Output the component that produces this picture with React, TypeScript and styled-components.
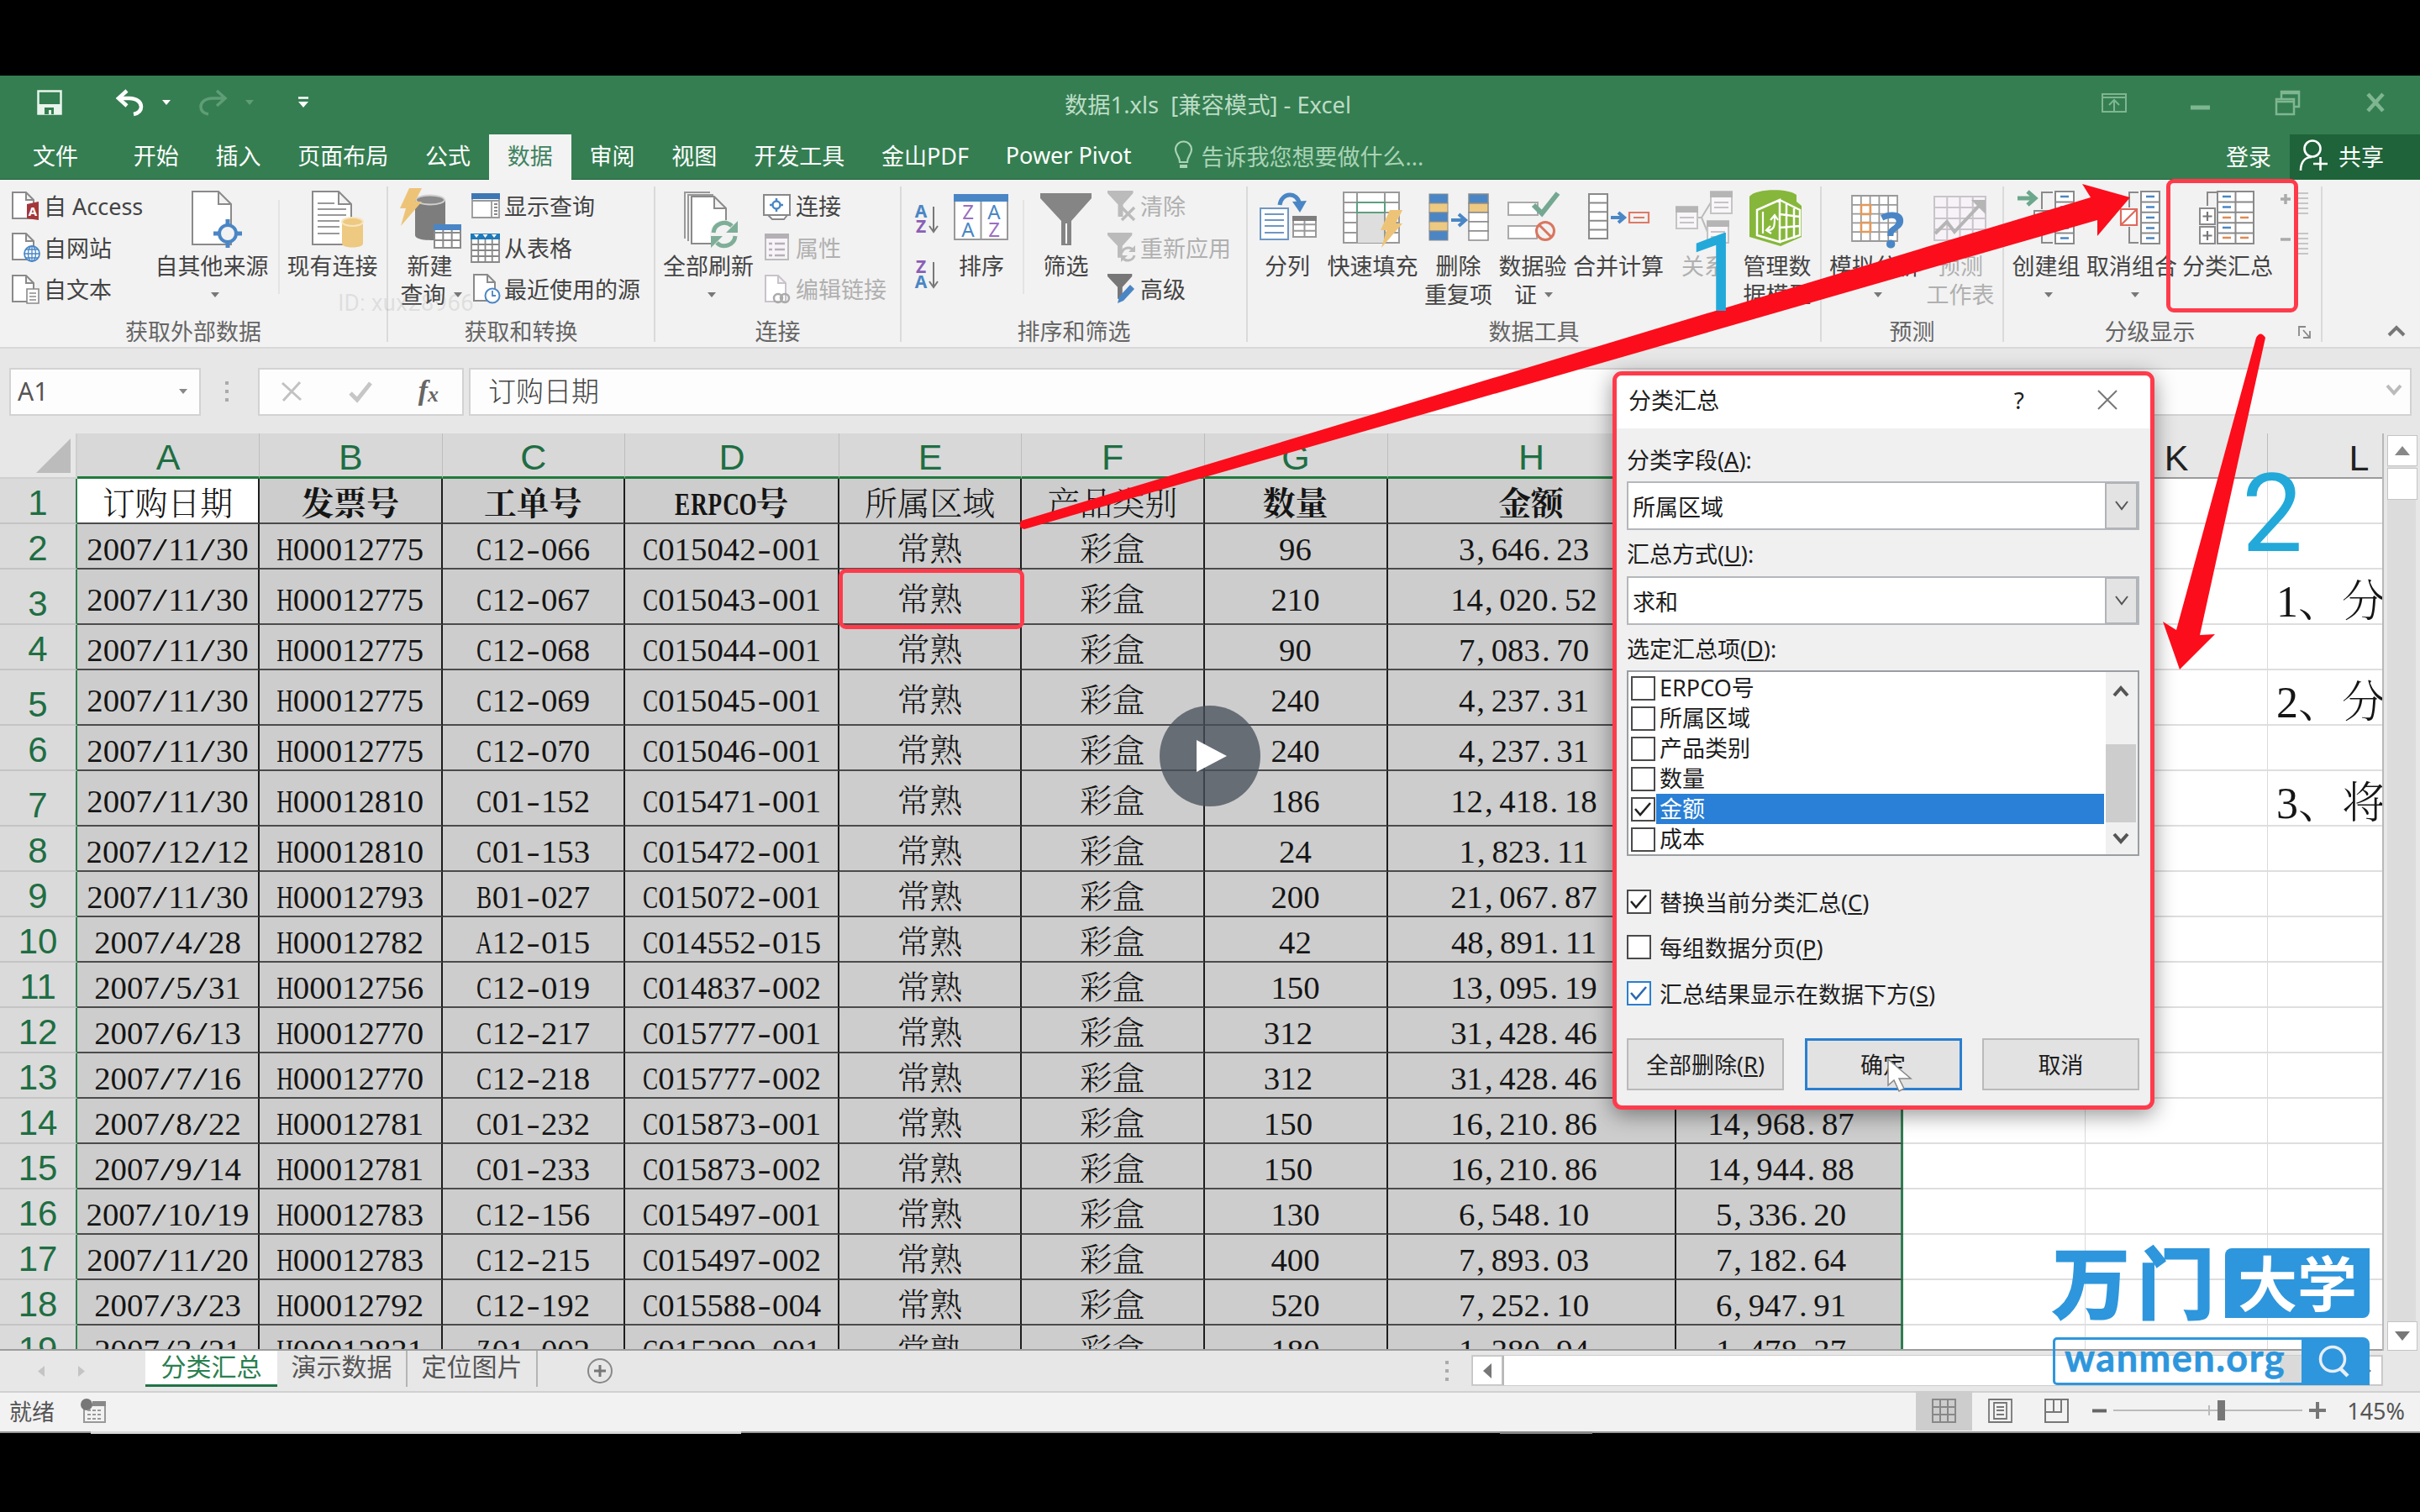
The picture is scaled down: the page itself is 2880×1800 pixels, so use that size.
import React from 'react';
import styled, { createGlobalStyle, css } from 'styled-components';

const UI = `"Noto Sans", "Noto Sans CJK SC", sans-serif`;
const SONG = `"Liberation Serif", "Noto Serif CJK SC", "Noto Sans CJK SC", serif`;
const GREEN = '#357e51';
const RED = '#ff3b4b';
const BLUE = '#4a86c5';

const GlobalStyle = createGlobalStyle`
  * { box-sizing: border-box; }
  body { margin: 0; background: #000; font-family: ${UI}; }
  svg { display: block; flex: none; overflow: visible; }
`;

/* ---------- frame ---------- */

const Screen = styled.div`
  position: relative;
  width: 2880px;
  height: 1800px;
  overflow: hidden;
  background: #000;
  padding-top: 90px;
  font-size: 27px;
  color: #444;
  white-space: nowrap;
`;

const AppWindow = styled.div`
  display: flex;
  flex-direction: column;
  width: 2880px;
  height: 1616px;
  background: #e7e7e7;
`;

/* ---------- title bar ---------- */

const TitleBar = styled.div`
  display: grid;
  grid-template-columns: 1fr auto 1fr;
  align-items: center;
  height: 70px;
  background: ${GREEN};
`;

const QuickAccess = styled.div`
  display: flex;
  align-items: center;
  padding: 0 0 6px 44px;
`;

const Gap = styled.span<{ $w: number }>`
  flex: none;
  width: ${(p) => p.$w}px;
`;

const DocTitle = styled.div`
  padding: 0 5px 5px 0;
  color: #bcdcc6;
  font-size: 27.3px;
  white-space: pre;
`;

const WindowControls = styled.div`
  display: flex;
  justify-content: flex-end;
  align-items: center;
  padding: 0 42px 6px 0;
`;

/* ---------- tab strip ---------- */

const TabStrip = styled.div`
  display: flex;
  height: 54px;
  background: ${GREEN};
  border-bottom: 1px solid #1f6439;
`;

const Tab = styled.div<{ $active?: boolean; $ml?: number }>`
  display: flex;
  align-items: center;
  height: 54px;
  margin-left: ${(p) => p.$ml ?? 0}px;
  padding: 0 21.9px 5px;
  color: ${(p) => (p.$active ? '#3f8360' : '#fff')};
  background: ${(p) => (p.$active ? '#f3f3f3' : 'transparent')};
`;

const TellMe = styled.div`
  display: flex;
  align-items: center;
  gap: 11px;
  margin-left: 29px;
  padding-bottom: 3px;
  color: #a9d3b6;
`;

const SignIn = styled.div`
  display: flex;
  align-items: center;
  margin-left: auto;
  padding: 0 22px 3px 0;
  color: #fff;
`;

const Share = styled.div`
  display: flex;
  align-items: center;
  gap: 12px;
  width: 155px;
  padding: 0 0 3px 12px;
  color: #fff;
  background: #1e6339;
`;

/* ---------- ribbon ---------- */

const Ribbon = styled.div`
  display: flex;
  height: 201px;
  padding: 8px 0 6px;
  background: #f2f2f2;
  border-bottom: 2px solid #d8d8d8;
`;

const Group = styled.div<{ $w: number }>`
  display: flex;
  flex-direction: column;
  flex: none;
  width: ${(p) => p.$w}px;
  border-right: 2px solid #dadada;
`;

const GroupBody = styled.div`
  display: flex;
  flex: none;
  height: 154px;
`;

const GroupLabel = styled.div`
  display: flex;
  align-items: center;
  justify-content: center;
  flex: none;
  height: 31px;
  padding-top: 3px;
  color: #666;
`;

const Launcher = styled.div`
  display: flex;
  margin: 4px 8px 0 auto;
`;

const LabelCenter = styled.div`
  flex: 1;
  text-align: center;
`;

const InnerRule = styled.div`
  width: 2px;
  height: 112px;
  margin-top: 16px;
  background: #e4e4e4;
`;

const Big = styled.div<{ $w: number; $dim?: boolean }>`
  display: flex;
  flex-direction: column;
  align-items: center;
  flex: none;
  width: ${(p) => p.$w}px;
  padding-top: 2px;
  line-height: 34px;
  color: ${(p) => (p.$dim ? '#b0b0b0' : '#444')};
`;

const BigCaption = styled.div`
  margin-top: 4px;
`;

const BigLine = styled.div<{ $dx?: number }>`
  display: flex;
  align-items: center;
  justify-content: center;
  gap: 9px;
  min-height: 34px;
  padding-left: ${(p) => p.$dx ?? 0}px;
`;

const SmallStack = styled.div<{ $w: number; $pl: number }>`
  flex: none;
  width: ${(p) => p.$w}px;
  padding-left: ${(p) => p.$pl}px;
  margin-top: -2px;
`;

const SmallItem = styled.div<{ $dim?: boolean; $gap?: number }>`
  display: flex;
  align-items: center;
  gap: ${(p) => p.$gap ?? 4}px;
  height: 49.5px;
  color: ${(p) => (p.$dim ? '#b0b0b0' : '#444')};
`;

const Caret = styled.span<{ $color?: string; $s?: number }>`
  flex: none;
  width: 0;
  height: 0;
  border: ${(p) => p.$s ?? 5.5}px solid transparent;
  border-bottom: 0;
  border-top: ${(p) => (p.$s ?? 5.5) + 1}px solid ${(p) => p.$color ?? '#777'};
`;

const SortStack = styled.div`
  display: flex;
  flex-direction: column;
  gap: 30px;
  width: 62px;
  padding: 21px 0 0 16px;
`;

const DetailStack = styled.div`
  display: flex;
  flex-direction: column;
  gap: 14px;
  padding: 6px 0 0 4px;
`;

const Collapse = styled.div`
  display: flex;
  align-items: flex-end;
  margin-left: auto;
  padding: 0 18px 7px 0;
`;

/* ---------- formula bar ---------- */

const FormulaBar = styled.div`
  display: flex;
  height: 101px;
  padding: 23px 10px 22px 11px;
  font-size: 31px;
`;

const FieldBox = styled.div<{ $w?: number }>`
  display: flex;
  align-items: center;
  ${(p) => (p.$w ? css`width: ${p.$w}px;` : css`flex: 1;`)}
  height: 57px;
  border: 2px solid #d2d2d2;
  background: #fdfdfd;
`;

const NameBox = styled(FieldBox)`
  justify-content: space-between;
  padding: 0 14px 2px 8px;
  color: #555;
  font-size: 30px;
`;

const Dots = styled.div<{ $ml: number; $mr: number }>`
  display: flex;
  flex-direction: column;
  justify-content: center;
  gap: 6px;
  margin: 0 ${(p) => p.$mr}px 0 ${(p) => p.$ml}px;
  &::before, &::after { content: ''; }
  &::before, &::after, & > i { width: 4px; height: 4px; background: #aaa; }
`;

const FxBox = styled(FieldBox)`
  justify-content: space-between;
  padding: 0 28px 2px 25px;
  margin-right: 6px;
`;

const Fx = styled.span`
  font: italic 700 34px "Liberation Serif", serif;
  color: #666;
  sub { font-size: 26px; vertical-align: -2px; }
`;

const FormulaInput = styled(FieldBox)`
  justify-content: space-between;
  padding: 0 10px 5px 21px;
  color: #444;
  font-size: 33px;
  font-weight: 300;
`;

/* ---------- sheet ---------- */

const SheetArea = styled.div`
  display: flex;
  height: 1092px;
`;

const Grid = styled.div`
  width: 2835px;
  overflow: hidden;
  border-bottom: 2px solid #9d9d9d;
`;

const HeaderRow = styled.div`
  display: flex;
  height: 54px;
`;

const Corner = styled.div`
  display: flex;
  justify-content: flex-end;
  align-items: flex-end;
  width: 92px;
  flex: none;
  padding: 0 6px 5px 0;
  border-right: 2px solid #cfcfcf;
  border-bottom: 2px solid #d0d0d0;
`;

const ColHead = styled.div<{ $w: number; $sel?: boolean }>`
  display: flex;
  align-items: center;
  justify-content: center;
  flex: none;
  width: ${(p) => p.$w}px;
  padding: 6px 0 0;
  font: 43px/1 "Liberation Sans", sans-serif;
  color: ${(p) => (p.$sel ? '#1f6e43' : '#222')};
  background: ${(p) => (p.$sel ? '#d8d8d8' : '#e7e7e7')};
  border-right: 1px solid #bdbdbd;
  border-bottom: ${(p) => (p.$sel ? '3px solid #217a3c' : '2px solid #9b9b9b')};
`;

const Row = styled.div<{ $h: number }>`
  display: flex;
  height: ${(p) => p.$h}px;
`;

const RowHead = styled.div`
  display: flex;
  align-items: flex-end;
  justify-content: center;
  flex: none;
  width: 92px;
  padding-bottom: 1px;
  font: 42px/44px "Liberation Sans", sans-serif;
  color: #1f6e43;
  background: #dadada;
  border-right: 2px solid #2f8050;
  border-bottom: 2px solid #c4c4c4;
`;

const Cell = styled.div<{ $w: number; $bold?: boolean; $white?: boolean; $last?: boolean }>`
  display: flex;
  align-items: center;
  justify-content: center;
  flex: none;
  width: ${(p) => p.$w}px;
  padding: 7px 0 0;
  font-family: ${SONG};
  font-size: 38.8px;
  line-height: 44px;
  font-weight: ${(p) => (p.$bold ? 700 : 300)};
  color: #151515;
  white-space: pre;
  background: ${(p) => (p.$white ? '#fff' : '#cdcdcd')};
  border-right: ${(p) => (p.$last ? '3px solid #2f7d50' : '2px solid #1d1d1d')};
  border-bottom: 2px solid #4b4b4b;
`;

const BlankCell = styled.div<{ $w: number }>`
  flex: none;
  width: ${(p) => p.$w}px;
  padding-left: 10px;
  font-family: ${SONG};
  font-size: 52px;
  line-height: 78px;
  font-weight: 300;
  color: #151515;
  background: #fff;
  border-right: 1px solid #dadada;
  border-bottom: 2px solid #dedede;
`;

const Half = styled.span<{ $left?: boolean }>`
  display: inline-flex;
  justify-content: ${(p) => (p.$left ? 'flex-start' : 'center')};
  width: 0.5em;
  padding-left: ${(p) => (p.$left ? 2 : 0)}px;
`;

const Squeeze = styled.span<{ $k: number }>`
  transform: scaleX(${(p) => p.$k});
`;

const Pad = styled.span`
  width: 0.44em;
`;

const VScroll = styled.div`
  display: flex;
  flex-direction: column;
  width: 45px;
  padding: 2px 5px 0 4px;
  border-left: 2px solid #b8b8b8;
`;

const VTrack = styled.div`
  flex: 1;
  padding-top: 2px;
  background: #dcdcdc;
`;

const ScrollBtn = styled.div<{ $w?: number; $h?: number }>`
  display: flex;
  align-items: center;
  justify-content: center;
  flex: none;
  width: ${(p) => p.$w ?? 36}px;
  height: ${(p) => p.$h ?? 37}px;
  background: #fff;
  border: 1px solid #c4c4c4;
`;

/* ---------- sheet tabs / status ---------- */

const SheetTabs = styled.div`
  display: flex;
  height: 50px;
  font-size: 30px;
  border-bottom: 2px solid #d0d0d0;
`;

const NavArrows = styled.div`
  display: flex;
  align-items: center;
  gap: 40px;
  width: 173px;
  padding-left: 45px;
`;

const SheetTab = styled.div<{ $active?: boolean }>`
  display: flex;
  align-items: center;
  justify-content: center;
  height: 43px;
  padding-bottom: 9px;
  width: ${(p) => (p.$active ? 157 : 155)}px;
  color: ${(p) => (p.$active ? '#2a7f50' : '#555')};
  ${(p) =>
    p.$active
      ? css`background: #fff; border-bottom: 3px solid #217346; padding-bottom: 6px;`
      : css`border-right: 2px solid #b5b5b5;`}
`;

const AddSheet = styled.div`
  display: flex;
  align-items: center;
  padding-left: 59px;
`;

const HScroll = styled.div`
  display: flex;
  width: 1085px;
  height: 37px;
  margin: 5px 44px 0 0;
  background: #fff;
  border: 1px solid #cdcdcd;
`;

const HTrack = styled.div`
  flex: 1;
  display: flex;
  justify-content: flex-end;
  border-left: 2px solid #b8b8b8;
  &::after { content: ''; width: 86px; background: #dadada; }
`;

const TabSpacer = styled.div`
  flex: 1;
`;

const StatusBar = styled.div`
  display: flex;
  align-items: center;
  height: 48px;
  padding: 0 18px 4px 11px;
  color: #555;
  background: #f2f2f2;
  border-bottom: 2px solid #999;
`;

const ViewBtn = styled.div<{ $on?: boolean }>`
  display: flex;
  align-items: center;
  justify-content: center;
  width: 67px;
  height: 47px;
  background: ${(p) => (p.$on ? '#cdcdcd' : 'transparent')};
`;

const ZoomTrack = styled.div`
  display: flex;
  align-items: center;
  width: 225px;
  height: 24px;
  background: linear-gradient(#bbb, #bbb) 0 11px / 100% 2px no-repeat,
    linear-gradient(#bbb, #bbb) 113px 6px / 2px 12px no-repeat;
`;

const ZoomThumb = styled.div`
  width: 9px;
  height: 24px;
  margin-left: 124px;
  background: #777;
`;

const EdgeStrip = styled.div<{ $x: number; $w: number; $c: string }>`
  position: absolute;
  left: ${(p) => p.$x}px;
  top: 1704px;
  width: ${(p) => p.$w}px;
  height: 3px;
  background: ${(p) => p.$c};
`;

/* ---------- dialog ---------- */

const Dialog = styled.div`
  position: absolute;
  left: 1919px;
  top: 442px;
  width: 645px;
  height: 879px;
  border: 5px solid ${RED};
  border-radius: 11px;
  background: #f0f0f0;
  box-shadow: 0 6px 26px rgba(0, 0, 0, 0.42);
  color: #1d1d1d;
  overflow: clip;
`;

const DialogTitle = styled.div`
  display: flex;
  align-items: center;
  height: 63px;
  padding: 0 39px 6px 14px;
  background: #fff;
`;

const Help = styled.span`
  margin: 0 87px 0 auto;
  font-size: 28px;
`;

const DialogBody = styled.div`
  display: flex;
  flex-direction: column;
  padding: 0 13px 0 12px;
`;

const FieldLabel = styled.div<{ $h: number; $pt?: number }>`
  display: flex;
  align-items: center;
  height: ${(p) => p.$h}px;
  padding-top: ${(p) => p.$pt ?? 0}px;
`;

const Combo = styled.div`
  display: flex;
  align-items: center;
  justify-content: space-between;
  height: 58px;
  padding-left: 5px;
  background: #fff;
  border: 2px solid #b4b7bb;
`;

const ComboButton = styled.div`
  display: flex;
  align-items: center;
  justify-content: center;
  width: 39px;
  height: 56px;
  background: #e3e3e3;
  border: 2px solid #b0b3b7;
`;

const ListBox = styled.div`
  display: flex;
  height: 221px;
  background: #fff;
  border: 2px solid #9a9da1;
`;

const ListItems = styled.div`
  flex: 1;
  padding: 1px 0 0 3px;
`;

const ListItem = styled.div`
  display: flex;
  align-items: center;
  height: 36px;
`;

const ItemText = styled.div<{ $sel?: boolean }>`
  flex: 1;
  height: 36px;
  line-height: 35px;
  padding-left: 4px;
  margin-left: 1px;
  color: ${(p) => (p.$sel ? '#fff' : 'inherit')};
  background: ${(p) => (p.$sel ? '#2a7fd6' : 'transparent')};
`;

const ListScroll = styled.div`
  display: flex;
  flex-direction: column;
  align-items: center;
  justify-content: space-between;
  width: 38px;
  padding: 17px 2px 13px 0;
  background: linear-gradient(#cdcdcd, #cdcdcd) 0 86px / 36px 93px no-repeat #f0f0f0;
`;

const CheckBox = styled.span<{ $c?: string }>`
  display: flex;
  align-items: center;
  justify-content: center;
  flex: none;
  width: 29px;
  height: 29px;
  background: #fff;
  border: 2px solid ${(p) => p.$c ?? '#4a4a4a'};
`;

const Options = styled.div`
  display: flex;
  flex-direction: column;
  margin-top: 27px;
`;

const Option = styled.div`
  display: flex;
  align-items: center;
  gap: 10px;
  height: 54.5px;
`;

const Buttons = styled.div`
  display: flex;
  justify-content: space-between;
  margin-top: 26px;
`;

const Button = styled.div<{ $primary?: boolean }>`
  display: flex;
  align-items: center;
  justify-content: center;
  width: 187px;
  height: 62px;
  background: #e2e2e2;
  border: ${(p) => (p.$primary ? '3px solid #2a7fd0' : '2px solid #bababa')};
`;

/* ---------- annotations ---------- */

const Overlay = styled.svg`
  position: absolute;
  left: 0;
  top: 0;
`;

const Mark = styled.div<{ $x: number; $y: number; $w: number; $h: number }>`
  position: absolute;
  left: ${(p) => p.$x}px;
  top: ${(p) => p.$y}px;
  width: ${(p) => p.$w}px;
  height: ${(p) => p.$h}px;
  border: 5px solid ${RED};
  border-radius: 9px;
`;

const StepNumber = styled.div<{ $x: number; $y: number }>`
  position: absolute;
  left: ${(p) => p.$x}px;
  top: ${(p) => p.$y}px;
  font: 400 129px/150px Roboto, sans-serif;
  color: #22a9d9;
`;

const Play = styled.div`
  position: absolute;
  left: 1380px;
  top: 840px;
  display: flex;
  align-items: center;
  justify-content: center;
  width: 120px;
  height: 120px;
  border-radius: 50%;
  background: rgba(71, 79, 90, 0.76);
`;

const Ghost = styled.div`
  position: absolute;
  left: 402px;
  top: 341px;
  font: 28px/40px Roboto, sans-serif;
  color: rgba(120, 120, 120, 0.16);
`;

const Brand = styled.div`
  position: absolute;
  left: 2443px;
  top: 1486px;
  width: 377px;
`;

const BrandTop = styled.div`
  display: flex;
  height: 83px;
  margin-bottom: 23px;
`;

const BrandName = styled.div`
  width: 205px;
  font: 700 91px/72px "Noto Sans CJK SC", sans-serif;
  letter-spacing: 10px;
  -webkit-text-stroke: 3px #2e96dc;
  color: #2e96dc;
`;

const BrandBadge = styled.div`
  flex: 1;
  height: 83px;
  padding-left: 15px;
  border-radius: 8px 0 8px 0;
  font: 700 71px/76px "Noto Sans CJK SC", sans-serif;
  color: #fff;
  background: #2e96dc;
`;

const BrandSearch = styled.div`
  display: flex;
  height: 57px;
  border: 3px solid #2e96dc;
  border-radius: 5px 8px 0 5px;
`;

const BrandUrl = styled.div`
  flex: 1;
  padding-left: 11px;
  font: 700 45px/43px Lato, sans-serif;
  letter-spacing: 1.5px;
  -webkit-text-stroke: 0.6px #2e96dc;
  color: #2e96dc;
`;

const BrandButton = styled.div`
  display: flex;
  align-items: center;
  justify-content: center;
  width: 78px;
  background: #2e96dc;
`;

/* ---------- icons ---------- */

const Art = ({ s = 72, h, children }: { s?: number; h?: number; children: React.ReactNode }) => (
  <svg width={s} height={h ?? s} viewBox={`0 0 ${s} ${h ?? s}`} fill="none">
    {children}
  </svg>
);

const Page = ({ x = 0, y = 0, w = 46, h = 63, f = 15, c = '#8a8a8a' }) => (
  <path
    d={`M${x} ${y}h${w - f}l${f} ${f}v${h - f}h${-w}z M${x + w - f} ${y}v${f}h${f}`}
    fill="#fff"
    stroke={c}
    strokeWidth="2"
  />
);

const Bolt = ({ x = 0, y = 0 }) => (
  <path d={`M${x + 11} ${y}h15l-8 16h8L${x + 1} ${y + 45}l6-21h-7z`} fill="#edc477" />
);

const gridPath = (x: number, y: number, w: number, h: number, c: number, r: number) => {
  let d = `M${x} ${y}h${w}v${h}h${-w}z`;
  for (let i = 1; i < c; i++) d += `M${x + (w * i) / c} ${y}v${h}`;
  for (let i = 1; i < r; i++) d += `M${x} ${y + (h * i) / r}h${w}`;
  return d;
};

const Funnel = ({ k = 1, c = '#858585' }) => (
  <path transform={`scale(${k})`} d="M0 0h61v6L37 33v29h-12V33L0 6z" fill={c} />
);

const Dash = ({ d, c = BLUE }: { d: string; c?: string }) => <path d={d} stroke={c} strokeWidth="2.5" />;

const Tick = ({ c = '#222' }) => (
  <Art s={23}>
    <path d="M2 11l6 7L20 4" stroke={c} strokeWidth="2.6" />
  </Art>
);

const Chevron = ({ up, c = '#555', w = 16, t = 3 }: { up?: boolean; c?: string; w?: number; t?: number }) => (
  <Art s={w} h={12}>
    <path d={up ? `M1 11L${w / 2} 2L${w - 1} 11` : `M1 1L${w / 2} 10L${w - 1} 1`} stroke={c} strokeWidth={t} />
  </Art>
);

const Letter = ({ x, y, c, s, children }: { x: number; y: number; c: string; s: number; children: string }) => (
  <text x={x} y={y} fill={c} fontSize={s} fontFamily={UI} textAnchor="middle" fontWeight={s < 23 ? 700 : 400}>
    {children}
  </text>
);

const SortArrow = ({ flip }: { flip?: boolean }) => (
  <Art s={30} h={36}>
    <Letter x={7} y={16} s={21} c={flip ? '#8a5fb5' : BLUE}>{flip ? 'Z' : 'A'}</Letter>
    <Letter x={7} y={34} s={21} c={flip ? BLUE : '#8a5fb5'}>{flip ? 'A' : 'Z'}</Letter>
    <path d="M22 3v29M17 26l5 7 5-7" stroke="#777" strokeWidth="2" />
  </Art>
);

const OutlineColumn = ({ x }: { x: number }) => (
  <>
    <path d={gridPath(x, 4, 22, 62, 1, 5)} fill="#fff" stroke="#8a8a8a" strokeWidth="2" />
    <Dash d={`M${x + 6} 10h10M${x + 6} 22.500h10M${x + 6} 35h10M${x + 6} 47.500h10M${x + 6} 59.500h10`} />
  </>
);

/* ---------- data ---------- */

const COLS: [string, number][] = [
  ['A', 217], ['B', 217.5], ['C', 217.5], ['D', 255], ['E', 217], ['F', 217.5],
  ['G', 218], ['H', 343], ['I', 270], ['J', 217.5], ['K', 217], ['L', 218],
];

const HEADS: [string, boolean][] = [
  ['订购日期', false], ['发票号', true], ['工单号', true], ['ERPCO号', true], ['所属区域', false],
  ['产品类别', false], ['数量', true], ['金额', true], ['', true],
];

const DATA: string[][] = [
  ['2007/11/30', 'H00012775', 'C12-066', 'C015042-001', '96', '3,646.23', ''],
  ['2007/11/30', 'H00012775', 'C12-067', 'C015043-001', '210', '14,020.52', ''],
  ['2007/11/30', 'H00012775', 'C12-068', 'C015044-001', '90', '7,083.70', ''],
  ['2007/11/30', 'H00012775', 'C12-069', 'C015045-001', '240', '4,237.31', ''],
  ['2007/11/30', 'H00012775', 'C12-070', 'C015046-001', '240', '4,237.31', ''],
  ['2007/11/30', 'H00012810', 'C01-152', 'C015471-001', '186', '12,418.18', ''],
  ['2007/12/12', 'H00012810', 'C01-153', 'C015472-001', '24', '1,823.11', ''],
  ['2007/11/30', 'H00012793', 'B01-027', 'C015072-001', '200', '21,067.87', ''],
  ['2007/4/28', 'H00012782', 'A12-015', 'C014552-015', '42', '48,891.11', ''],
  ['2007/5/31', 'H00012756', 'C12-019', 'C014837-002', '150', '13,095.19', ''],
  ['2007/6/13', 'H00012770', 'C12-217', 'C015777-001', '312 ', '31,428.46', ''],
  ['2007/7/16', 'H00012770', 'C12-218', 'C015777-002', '312 ', '31,428.46', ''],
  ['2007/8/22', 'H00012781', 'C01-232', 'C015873-001', '150 ', '16,210.86', '14,968.87'],
  ['2007/9/14', 'H00012781', 'C01-233', 'C015873-002', '150 ', '16,210.86', '14,944.88'],
  ['2007/10/19', 'H00012783', 'C12-156', 'C015497-001', '130', '6,548.10', '5,336.20'],
  ['2007/11/20', 'H00012783', 'C12-215', 'C015497-002', '400', '7,893.03', '7,182.64'],
  ['2007/3/23', 'H00012792', 'C12-192', 'C015588-004', '520', '7,252.10', '6,947.91'],
  ['2007/3/21', 'H00012831', 'Z01-002', 'C015399-001', '180', '1,380.94', '1,478.37'],
];

const NOTES: Record<number, string> = { 3: '1、分', 5: '2、分', 7: '3、将' };

const STRETCH: Record<string, number> = { '/': 1.6, '-': 1.25 };

/* Sets Latin capitals and punctuation on the same half-em grid as the digits. */
const SongText = ({ value }: { value: string }) => (
  <span>
    {value.trimEnd().split(/([A-Z/,.-])/).filter(Boolean).map((t, i) =>
      /^[A-Z/-]$/.test(t) ? (
        <Half key={i}><Squeeze $k={STRETCH[t] ?? 0.7}>{t}</Squeeze></Half>
      ) : /^[,.]$/.test(t) ? (
        <Half key={i} $left>{t}</Half>
      ) : (
        t
      ),
    )}
  </span>
);

const cellsOf = (r: string[]) => [r[0], r[1], r[2], r[3], '常熟', '彩盒', r[4], r[5] + ' ', r[6] + ' '];

/* ---------- sections ---------- */

const TopBar = () => (
  <TitleBar>
    <QuickAccess>
      <Art s={30}>
        <path d="M1.500 1.500h27v27h-27z" stroke="#e8f5ec" strokeWidth="2.500" />
        <path d="M1 17h28v12H1z" fill="#e8f5ec" />
        <path d="M9 21h11v8h-3v-5h-3v5H9z" fill={GREEN} />
      </Art>
      <Gap $w={64} />
      <Art s={34} h={30}>
        <path d="M3 10h13c9 0 14 5 14 10 0 5-4 8-9 9" stroke="#fff" strokeWidth="4.500" />
        <path d="M13 1L3 10l10 9" stroke="#fff" strokeWidth="4.500" />
      </Art>
      <Gap $w={21} />
      <Caret $color="#fff" />
      <Gap $w={34} />
      <Art s={34} h={30}>
        <path d="M30 10H16C7 10 2 15 2 20c0 5 4 8 9 9M21 1l10 9-10 9" stroke="#5f9d77" strokeWidth="3.500" />
      </Art>
      <Gap $w={21} />
      <Caret $color="#5f9d77" />
      <Gap $w={53} />
      <Art s={12} h={14}>
        <path d="M0 1.500h12" stroke="#fff" strokeWidth="2.500" />
        <path d="M0 6h12l-6 7z" fill="#fff" />
      </Art>
    </QuickAccess>
    <DocTitle>{'数据1.xls  [兼容模式] - Excel'}</DocTitle>
    <WindowControls>
      <Art s={30} h={22}>
        <path d="M1 1h28v21H1zM1 5h28M15 21V9M9 14l6-6 6 6" stroke="#7fb692" strokeWidth="2" />
      </Art>
      <Gap $w={76} />
      <Art s={23} h={22}>
        <path d="M0 17h23" stroke="#7fb692" strokeWidth="5" />
      </Art>
      <Gap $w={78} />
      <Art s={29}>
        <path d="M7 9V1h21v18h-6M7 3h21M1 10h21v18H1zM1 13h21" stroke="#7fb692" strokeWidth="2.500" />
      </Art>
      <Gap $w={79} />
      <Art s={22} h={22}>
        <path d="M2 1l18 20M20 1L2 21" stroke="#7fb692" strokeWidth="4.500" />
      </Art>
    </WindowControls>
  </TitleBar>
);

const TABS = ['插入', '页面布局', '公式', '数据', '审阅', '视图', '开发工具', '金山PDF', 'Power Pivot'];

const Tabs = () => (
  <TabStrip>
    <Tab $ml={17}>文件</Tab>
    <Tab $ml={22}>开始</Tab>
    {TABS.map((t) => (
      <Tab key={t} $active={t === '数据'}>{t}</Tab>
    ))}
    <TellMe>
      <Art s={21} h={34}>
        <path d="M6 25c0-7-5-9-5-15a9.500 9.500 0 0 1 19 0c0 6-5 8-5 15z" stroke="#a9d3b6" strokeWidth="2.200" />
        <path d="M6 28h9v4H6z" fill="#a9d3b6" />
      </Art>
      告诉我您想要做什么...
    </TellMe>
    <SignIn>登录</SignIn>
    <Share>
      <Art s={34} h={38}>
        <circle cx="15" cy="11" r="9.500" stroke="#fff" strokeWidth="2.600" />
        <path d="M1 37c0-10 5-16 13-16M16 29h17M24.500 21v16" stroke="#fff" strokeWidth="2.600" />
      </Art>
      共享
    </Share>
  </TabStrip>
);

const SmallPage = ({ children, c }: { children?: React.ReactNode; c?: string }) => (
  <Art s={34}>
    <Page x={1} y={1} w={25} h={31} f={9} c={c} />
    {children}
  </Art>
);

const RibbonBar = () => (
  <Ribbon>
    <Group $w={462}>
      <GroupBody>
        <SmallStack $w={178} $pl={14}>
          <SmallItem>
            <SmallPage>
              <path d="M18 15l14-3v22l-14-2z" fill="#a4373a" />
              <Letter x={25} y={29} s={15} c="#fff">A</Letter>
            </SmallPage>
            自 Access
          </SmallItem>
          <SmallItem>
            <SmallPage>
              <circle cx="24" cy="25" r="9" fill="#fff" stroke={BLUE} strokeWidth="1.800" />
              <path d="M15 25h18M24 16v18M17 20h14M17 30h14" stroke={BLUE} strokeWidth="1.300" />
              <ellipse cx="24" cy="25" rx="4.500" ry="9" stroke={BLUE} strokeWidth="1.300" />
            </SmallPage>
            自网站
          </SmallItem>
          <SmallItem>
            <SmallPage>
              <path d="M18 17h14v17H18zM21 22h8M21 26h8M21 30h8" fill="#fff" stroke="#8a8a8a" strokeWidth="1.600" />
            </SmallPage>
            自文本
          </SmallItem>
        </SmallStack>
        <Big $w={148}>
          <Art>
            <Page x={13} y={4} />
            <circle cx="55" cy="54" r="10" fill="#f2f2f2" stroke={BLUE} strokeWidth="4" />
            <path d="M55 37v8M55 63v8M38 54h8M64 54h8" stroke={BLUE} strokeWidth="5" />
          </Art>
          <BigCaption><BigLine>自其他来源</BigLine><BigLine $dx={7}><Caret /></BigLine></BigCaption>
        </Big>
        <Gap $w={5} />
        <InnerRule />
        <Big $w={125}>
          <Art>
            <Page x={12} y={4} />
            <path d="M18 18h20M18 25h34M18 32h34M18 39h26M18 46h26M18 54h26" stroke="#999" strokeWidth="2" />
            <path d="M47 40v26c0 6 25 6 25 0V40z" fill="#edc981" />
            <ellipse cx="59.500" cy="40" rx="12.500" ry="5" fill="#edc981" stroke="#f7e5be" strokeWidth="2" />
          </Art>
          <BigCaption>现有连接</BigCaption>
        </Big>
      </GroupBody>
      <GroupLabel>获取外部数据</GroupLabel>
    </Group>

    <Group $w={318}>
      <GroupBody>
        <Gap $w={9} />
        <Big $w={81}>
          <Art>
            <path d="M18 14v42c0 8 36 8 36 0V14z" fill="#7d7d7d" />
            <ellipse cx="36" cy="14" rx="17" ry="5.500" fill="#8a8a8a" stroke="#d0d0d0" strokeWidth="2" />
            <Bolt x={0} y={0} />
            <path d={gridPath(41, 44, 31, 27, 3, 3)} fill="#fff" stroke="#8a8a8a" strokeWidth="2" />
            <path d="M40 43h33v7H40z" fill={BLUE} />
          </Art>
          <BigCaption><BigLine>新建</BigLine><BigLine $dx={3}>查询<Caret /></BigLine></BigCaption>
        </Big>
        <SmallStack $w={220} $pl={8}>
          <SmallItem $gap={5}>
            <Art s={35}>
              <path d="M2 4h32v28H2zM25 12v20M2 12h32" fill="#fff" stroke="#999" strokeWidth="1.800" />
              <path d="M1 3h34v7H1z" fill="#3f77b5" />
              <path d="M28 16h4M28 20h4M28 24h4M28 28h4" stroke="#888" strokeWidth="2" />
            </Art>
            显示查询
          </SmallItem>
          <SmallItem $gap={5}>
            <Art s={35}>
              <path d={gridPath(1, 7, 33, 28, 4, 4)} fill="#fff" stroke="#888" strokeWidth="1.800" />
              <path d="M0 1h35v7H0z" fill="#1f7ab8" />
              <path d="M4 2h6l-3 4zM14.500 2h6l-3 4zM25 2h6l-3 4z" fill="#fff" />
            </Art>
            从表格
          </SmallItem>
          <SmallItem $gap={5}>
            <Art s={35}>
              <Page x={4} y={1} w={25} h={31} f={9} />
              <circle cx="26" cy="26" r="8.500" fill="#fff" stroke={BLUE} strokeWidth="2" />
              <path d="M26 20v6h4" stroke={BLUE} strokeWidth="1.800" />
            </Art>
            最近使用的源
          </SmallItem>
        </SmallStack>
      </GroupBody>
      <GroupLabel>获取和转换</GroupLabel>
    </Group>

    <Group $w={293}>
      <GroupBody>
        <Big $w={126}>
          <Art>
            <path d="M8 60V5h30M12 63V8h30" stroke="#999" strokeWidth="2" />
            <Page x={16} y={10} w={41} h={56} f={14} />
            <circle cx="55" cy="55" r="17" fill="#f2f2f2" />
            <path d="M42 53a13 13 0 0 1 22-8M68 57a13 13 0 0 1-22 8" stroke="#7fae98" strokeWidth="5" />
            <path d="M71 39v14H57zM39 71V57h14z" fill="#7fae98" />
          </Art>
          <BigCaption><BigLine>全部刷新</BigLine><BigLine $dx={8}><Caret /></BigLine></BigCaption>
        </Big>
        <SmallStack $w={160} $pl={1}>
          <SmallItem $gap={6}>
            <Art s={34}>
              <path d="M2 4h31v24H2zM7 28l5 5h14l4-5" fill="#fff" stroke="#888" strokeWidth="2" />
              <path d="M17 8v16M9 16h16" stroke={BLUE} strokeWidth="2.500" />
              <circle cx="17" cy="16" r="4.500" fill="#fff" stroke={BLUE} strokeWidth="2.500" />
            </Art>
            连接
          </SmallItem>
          <SmallItem $dim $gap={6}>
            <Art s={34}>
              <path d="M4 2h27v30H4z" fill="#f7f4f8" stroke="#bbb" strokeWidth="2" />
              <path d="M3 1h29v6H3z" fill="#b5b0b6" />
              <path d="M8 13h4M15 13h12M8 20h4M15 20h12M8 27h4M15 27h12" stroke="#b5b0b6" strokeWidth="2.500" />
            </Art>
            属性
          </SmallItem>
          <SmallItem $dim $gap={6}>
            <Art s={34}>
              <Page x={4} y={1} w={24} h={31} f={9} c="#c9c2cb" />
              <circle cx="19" cy="28" r="5" stroke="#aaa" strokeWidth="2.500" />
              <circle cx="27" cy="28" r="5" stroke="#aaa" strokeWidth="2.500" />
            </Art>
            编辑链接
          </SmallItem>
        </SmallStack>
      </GroupBody>
      <GroupLabel>连接</GroupLabel>
    </Group>

    <Group $w={412}>
      <GroupBody>
        <SortStack>
          <SortArrow />
          <SortArrow flip />
        </SortStack>
        <Big $w={66}>
          <Art>
            <path d="M4 8h63v53H4zM35.500 15v46" fill="#fff" stroke="#999" strokeWidth="2" />
            <path d="M3 7h65v9H3z" fill={BLUE} />
            <Letter x={20} y={37} s={24} c="#9a6fc0">Z</Letter>
            <Letter x={20} y={58} s={24} c={BLUE}>A</Letter>
            <Letter x={51} y={37} s={24} c={BLUE}>A</Letter>
            <Letter x={51} y={58} s={24} c="#9a6fc0">Z</Letter>
          </Art>
          <BigCaption>排序</BigCaption>
        </Big>
        <Gap $w={16} />
        <InnerRule />
        <Big $w={99}>
          <Art>
            <g transform="translate(5 6)"><Funnel /></g>
            <path d="M36 42v24" stroke="#fff" strokeWidth="2" />
          </Art>
          <BigCaption>筛选</BigCaption>
        </Big>
        <SmallStack $w={160} $pl={0}>
          <SmallItem $dim>
            <Art s={35}>
              <Funnel k={0.5} c="#bbb" />
              <path d="M17 20l15 15M32 20L17 35" stroke="#bbb" strokeWidth="3.500" />
            </Art>
            清除
          </SmallItem>
          <SmallItem $dim>
            <Art s={35}>
              <Funnel k={0.48} c="#bbb" />
              <path d="M17 24a8 8 0 0 1 14-3M32 27a8 8 0 0 1-14 3" stroke="#bbb" strokeWidth="3" />
              <path d="M33 15v8h-8zM16 35v-8h8z" fill="#bbb" />
            </Art>
            重新应用
          </SmallItem>
          <SmallItem>
            <Art s={35}>
              <Funnel k={0.48} c="#777" />
              <path d="M12 35l2-8 13-14 5 5-13 14z" fill={BLUE} />
            </Art>
            高级
          </SmallItem>
        </SmallStack>
      </GroupBody>
      <GroupLabel>排序和筛选</GroupLabel>
    </Group>

    <Group $w={683}>
      <GroupBody>
        <Gap $w={3} />
        <Big $w={88}>
          <Art>
            <path d="M4 24h33v37H4zM9 31h23M9 38h23M9 45h23M9 53h23" fill="#fff" stroke="#6e97c4" strokeWidth="2" />
            <path d={gridPath(43, 36, 27, 22, 2, 3)} fill="#fff" stroke="#999" strokeWidth="2" />
            <path d="M42 33h29v6H42z" fill="#7d7d7d" />
            <path d="M27 20C29 5 48 3 51 20" stroke={BLUE} strokeWidth="5" />
            <path d="M42 16l9 13 8-14z" fill={BLUE} />
          </Art>
          <BigCaption>分列</BigCaption>
        </Big>
        <Big $w={115}>
          <Art>
            <path d={gridPath(1, 5, 66, 60, 1, 5)} fill="#fff" stroke="#999" strokeWidth="2" />
            <path d="M17 28h33v37H17z" fill="#dedede" />
            <path d="M17 5v60M50 5v60" stroke="#999" strokeWidth="2" />
            <path d="M17 17h33v12H17z" fill="#fff" stroke="#5e9f80" strokeWidth="2" />
            <Bolt x={45} y={26} />
          </Art>
          <BigCaption>快速填充</BigCaption>
        </Big>
        <Big $w={89}>
          <Art>
            {['#4a86c5', '#edc981', '#4a86c5', '#edc981', '#4a86c5'].map((c, i) => (
              <rect key={i} x="1" y={7 + i * 11} width="22" height="11" fill={c} stroke="#8a8a8a" />
            ))}
            {['#4a86c5', '#edc981', '#fff', '#fff', '#fff'].map((c, i) => (
              <rect key={i} x="48" y={7 + i * 11} width="23" height="11" fill={c} stroke="#8a8a8a" strokeWidth="1.500" />
            ))}
            <path d="M27 38h14M36 31l8 7-8 7" stroke={BLUE} strokeWidth="4" />
          </Art>
          <BigCaption><BigLine>删除</BigLine><BigLine>重复项</BigLine></BigCaption>
        </Big>
        <Big $w={88}>
          <Art>
            <path d="M7 17h35v15H7zM7 45h34v15H7z" fill="#fff" stroke="#aaa" strokeWidth="2" />
            <path d="M37 20l10 10L66 6" stroke="#74a892" strokeWidth="6" />
            <circle cx="51" cy="51" r="10.500" fill="#f2f2f2" stroke="#d9765f" strokeWidth="3" />
            <path d="M44 44l14 14" stroke="#d9765f" strokeWidth="3" />
          </Art>
          <BigCaption><BigLine>数据验</BigLine><BigLine $dx={2}>证<Caret /></BigLine></BigCaption>
        </Big>
        <Big $w={116}>
          <Art>
            <path d={gridPath(1, 7, 22, 53, 1, 5)} fill="#fff" stroke="#8a8a8a" strokeWidth="2" />
            <path d="M27 35h13M36 29l7 6-7 6" stroke={BLUE} strokeWidth="4" />
            <path d="M49 29h23v12H49zM54 35h13" stroke="#dd7a66" strokeWidth="2.200" />
          </Art>
          <BigCaption>合并计算</BigCaption>
        </Big>
        <Big $w={88} $dim>
          <Art>
            <path d="M28 35h5L44 17M33 35l7 17" stroke="#bbb" strokeWidth="2" />
            {[[3, 22], [44, 4], [40, 39]].map(([x, y]) => (
              <g key={x}>
                <path d={`M${x} ${y}h25v26h-25zM${x + 4} ${y + 13}h17M${x + 4} ${y + 19}h17`} fill="#f8f6f8" stroke="#c4c4c4" strokeWidth="2" />
                <path d={`M${x - 1} ${y}h27v7h-27z`} fill="#b5b5b5" />
              </g>
            ))}
          </Art>
          <BigCaption>关系</BigCaption>
        </Big>
        <Big $w={86}>
          <Art>
            <path d="M3 10C10 0 50 0 59 8v8l6 5v37L40 69 3 58z" fill="#86b73a" />
            <path d="M12 26l27-12v50L12 56z M39 14l24 12v30L39 64M39 31l24 3M39 47l24-2M47 18v44M56 22v38" stroke="#fff" strokeWidth="2.500" />
            <path d="M19 54V28M25 50c8 0 8-6 8-16M28 38l5-6 4 6M28 45l-5 5 6 4" stroke="#fff" strokeWidth="2.200" />
          </Art>
          <BigCaption><BigLine>管理数</BigLine><BigLine>据模型</BigLine></BigCaption>
        </Big>
      </GroupBody>
      <GroupLabel>数据工具</GroupLabel>
    </Group>

    <Group $w={217}>
      <GroupBody>
        <Gap $w={3} />
        <Big $w={120}>
          <Art>
            <path d={gridPath(9, 9, 54, 54, 5, 5)} fill="#fff" stroke="#999" strokeWidth="1.800" />
            <path d="M20 20h11v11H20zM20 41h11v11H20z" stroke="#e39a5c" strokeWidth="2.500" />
            <text x="57" y="71" fill={BLUE} fontSize="60" fontWeight="700" fontFamily={UI} textAnchor="middle">?</text>
          </Art>
          <BigCaption><BigLine>模拟分析</BigLine><BigLine $dx={8}><Caret /></BigLine></BigCaption>
        </Big>
        <Big $w={84} $dim>
          <Art>
            <path d={gridPath(5, 10, 61, 52, 4, 4)} fill="#f6f2f7" stroke="#c9c4ca" strokeWidth="2" />
            <path d="M6 54l14-14 9 12 30-32" stroke="#b5b5b5" strokeWidth="4" />
            <path d="M49 14h17v17z" fill="#b5b5b5" />
          </Art>
          <BigCaption><BigLine>预测</BigLine><BigLine>工作表</BigLine></BigCaption>
        </Big>
      </GroupBody>
      <GroupLabel>预测</GroupLabel>
    </Group>

    <Group $w={379}>
      <GroupBody>
        <Big $w={100}>
          <Art>
            <path d="M2 12h18M14 4l9 8-9 8" stroke="#6ba78c" strokeWidth="5" />
            <path d="M44 5H31v20M22 40V27h16v12M44 65H31V43" stroke="#8a8a8a" strokeWidth="2" />
            <OutlineColumn x={47} />
          </Art>
          <BigCaption><BigLine>创建组</BigLine><BigLine $dx={6}><Caret /></BigLine></BigCaption>
        </Big>
        <Big $w={104}>
          <Art>
            <path d="M44 5H33v18M44 65H33V46" stroke="#8a8a8a" strokeWidth="2" />
            <path d="M23 25h19v19H23zM23 44l19-19" fill="#fff" stroke="#dd6a5c" strokeWidth="2.200" />
            <OutlineColumn x={47} />
          </Art>
          <BigCaption><BigLine>取消组合</BigLine><BigLine $dx={8}><Caret /></BigLine></BigCaption>
        </Big>
        <Gap $w={3} />
        <Big $w={118}>
          <Art>
            <path d="M23 5H12v16" stroke="#8a8a8a" strokeWidth="2" />
            <path d="M3 24h18v19H3zM3 46h18v20H3z" fill="#fff" stroke="#8a8a8a" strokeWidth="2" />
            <path d="M12 28v11M6.500 33.500h11M12 51v11M6.500 56.500h11" stroke="#777" strokeWidth="2.200" />
            <path d={gridPath(24, 4, 43, 62, 2, 5)} fill="#fff" stroke="#8a8a8a" strokeWidth="2" />
            <Dash d="M30 10h10M30 22.500h10M30 47h10" />
            <Dash d="M30 35h10M51 35h10M30 59h10M51 59h10" c="#e08a55" />
          </Art>
          <BigCaption>分类汇总</BigCaption>
        </Big>
        <DetailStack>
          {['+', '-'].map((k) => (
            <Art key={k} s={34}>
              <path d={k === '+' ? 'M0 9h12M6 3v12' : 'M0 9h12'} stroke="#aaa" strokeWidth="3.500" />
              <path d="M18 2h15M21 8h12M21 14h12M18 20h15M21 26h12" stroke="#c6c6c6" strokeWidth="2.200" />
            </Art>
          ))}
        </DetailStack>
      </GroupBody>
      <GroupLabel>
        <LabelCenter>分级显示</LabelCenter>
        <Launcher>
          <Art s={22} h={16}>
            <path d="M12 2H4v11M9 6l7 8M17 7v8h-8" stroke="#888" strokeWidth="1.800" />
          </Art>
        </Launcher>
      </GroupLabel>
    </Group>
    <Collapse><Chevron up w={20} c="#777" t={4} /></Collapse>
  </Ribbon>
);

const Formula = () => (
  <FormulaBar>
    <NameBox $w={228}>A1<Caret $color="#888" /></NameBox>
    <Dots $ml={29} $mr={35}><i /></Dots>
    <FxBox $w={245}>
      <Art s={26}>
        <path d="M2 3l22 20M23 2L3 24" stroke="#c2c2c2" strokeWidth="3" />
      </Art>
      <Art s={28} h={24}>
        <path d="M2 14l8 8L26 2" stroke="#c6c6c6" strokeWidth="5" />
      </Art>
      <Fx>f<sub>x</sub></Fx>
    </FxBox>
    <FormulaInput>订购日期<Chevron w={18} c="#bbb" t={4} /></FormulaInput>
  </FormulaBar>
);

const Sheet = () => (
  <SheetArea>
    <Grid>
      <HeaderRow>
        <Corner>
          <Art s={41}><path d="M41 0v41H0z" fill="#bcbcbc" /></Art>
        </Corner>
        {COLS.map(([name, w], i) => (
          <ColHead key={name} $w={w} $sel={i < 9}>{name}</ColHead>
        ))}
      </HeaderRow>
      <Row $h={54}>
        <RowHead>1</RowHead>
        {HEADS.map(([t, bold], i) => (
          <Cell key={i} $w={COLS[i][1]} $bold={bold} $white={i === 0} $last={i === 8}>
            <SongText value={t} />
          </Cell>
        ))}
        {[9, 10, 11].map((i) => <BlankCell key={i} $w={COLS[i][1]} />)}
      </Row>
      {DATA.map((r, n) => {
        const row = n + 2;
        return (
          <Row key={row} $h={NOTES[row] ? 66 : 54}>
            <RowHead>{row}</RowHead>
            {cellsOf(r).map((t, i) => (
              <Cell key={i} $w={COLS[i][1]} $last={i === 8}>
                <SongText value={t} />
                {t.endsWith(' ') && <Pad />}
              </Cell>
            ))}
            {[9, 10, 11].map((i) => (
              <BlankCell key={i} $w={COLS[i][1]}>{i === 11 ? NOTES[row] : null}</BlankCell>
            ))}
          </Row>
        );
      })}
    </Grid>
    <VScroll>
      <ScrollBtn><Art s={18} h={11}><path d="M0 11L9 0l9 11z" fill="#888" /></Art></ScrollBtn>
      <VTrack><ScrollBtn $h={38} /></VTrack>
      <ScrollBtn $h={35}><Art s={18} h={11}><path d="M0 0l9 11 9-11z" fill="#777" /></Art></ScrollBtn>
    </VScroll>
  </SheetArea>
);

const BottomTabs = () => (
  <SheetTabs>
    <NavArrows>
      <Art s={8} h={13}><path d="M8 0v13L0 6.500z" fill="#c4c4c4" /></Art>
      <Art s={8} h={13}><path d="M0 0v13l8-6.500z" fill="#c4c4c4" /></Art>
    </NavArrows>
    <SheetTab $active>分类汇总</SheetTab>
    <SheetTab>演示数据</SheetTab>
    <SheetTab>定位图片</SheetTab>
    <AddSheet>
      <Art s={30}>
        <circle cx="15" cy="15" r="14" stroke="#888" strokeWidth="2" />
        <path d="M15 8v14M8 15h14" stroke="#777" strokeWidth="3" />
      </Art>
    </AddSheet>
    <TabSpacer />
    <Dots $ml={0} $mr={27}><i /></Dots>
    <HScroll>
      <ScrollBtn $w={36} $h={35}><Art s={10} h={18}><path d="M10 0v18L0 9z" fill="#777" /></Art></ScrollBtn>
      <HTrack />
      <ScrollBtn $w={36} $h={35}><Art s={10} h={18}><path d="M0 0v18l10-9z" fill="#777" /></Art></ScrollBtn>
    </HScroll>
  </SheetTabs>
);

const Status = () => (
  <StatusBar>
    就绪
    <Gap $w={31} />
    <Art s={31} h={29}>
      <path d="M4 8h25v20H4z" stroke="#999" strokeWidth="2" />
      <path d="M14 3h16v6H14z" fill="#888" />
      <circle cx="7" cy="7" r="7" fill="#777" />
      <path d="M8 14h18M8 19h18M8 24h18" stroke="#999" strokeWidth="2" strokeDasharray="4 2" />
    </Art>
    <TabSpacer />
    <ViewBtn $on>
      <Art s={29}><path d={gridPath(1, 1, 27, 27, 3, 3)} stroke="#888" strokeWidth="2" /></Art>
    </ViewBtn>
    <ViewBtn>
      <Art s={29}><path d="M1 1h27v27H1zM7 5h15v19H7zM10 10h9M10 14h9M10 19h9" stroke="#777" strokeWidth="1.800" /></Art>
    </ViewBtn>
    <ViewBtn>
      <Art s={29}><path d="M1 1h27v27H1zM1 16h19V1M11 1v15" stroke="#777" strokeWidth="2" /></Art>
    </ViewBtn>
    <Gap $w={9} />
    <Art s={17}><path d="M0 8.500h17" stroke="#666" strokeWidth="4" /></Art>
    <Gap $w={8} />
    <ZoomTrack><ZoomThumb /></ZoomTrack>
    <Gap $w={8} />
    <Art s={20}><path d="M0 10h20M10 0v20" stroke="#777" strokeWidth="4" /></Art>
    <Gap $w={25} />
    145%
  </StatusBar>
);

const ITEMS = ['ERPCO号', '所属区域', '产品类别', '数量', '金额', '成本'];

const SubtotalDialog = () => (
  <Dialog>
    <DialogTitle>
      分类汇总
      <Help>?</Help>
      <Art s={24}><path d="M1 1l22 22M23 1L1 23" stroke="#777" strokeWidth="2" /></Art>
    </DialogTitle>
    <DialogBody>
      <FieldLabel $h={63} $pt={9}><span>分类字段(<u>A</u>):</span></FieldLabel>
      <Combo>所属区域<ComboButton><Chevron w={16} t={2} /></ComboButton></Combo>
      <FieldLabel $h={55}><span>汇总方式(<u>U</u>):</span></FieldLabel>
      <Combo>求和<ComboButton><Chevron w={16} t={2} /></ComboButton></Combo>
      <FieldLabel $h={54}><span>选定汇总项(<u>D</u>):</span></FieldLabel>
      <ListBox>
        <ListItems>
          {ITEMS.map((t) => (
            <ListItem key={t}>
              <CheckBox>{t === '金额' && <Tick />}</CheckBox>
              <ItemText $sel={t === '金额'}>{t}</ItemText>
            </ListItem>
          ))}
        </ListItems>
        <Gap $w={2} />
        <ListScroll>
          <Chevron up w={18} t={4} />
          <Chevron w={18} t={4} />
        </ListScroll>
      </ListBox>
      <Options>
        <Option><CheckBox><Tick /></CheckBox><span>替换当前分类汇总(<u>C</u>)</span></Option>
        <Option><CheckBox /><span>每组数据分页(<u>P</u>)</span></Option>
        <Option><CheckBox $c="#2a7fd0"><Tick c="#2a6ab0" /></CheckBox><span>汇总结果显示在数据下方(<u>S</u>)</span></Option>
      </Options>
      <Buttons>
        <Button><span>全部删除(<u>R</u>)</span></Button>
        <Button $primary>确定</Button>
        <Button>取消</Button>
      </Buttons>
    </DialogBody>
  </Dialog>
);

const App = () => (
  <Screen>
    <GlobalStyle />
    <AppWindow>
      <TopBar />
      <Tabs />
      <RibbonBar />
      <Formula />
      <Sheet />
      <BottomTabs />
      <Status />
    </AppWindow>
    <EdgeStrip $x={108} $w={774} $c="#d9d9d9" />
    <EdgeStrip $x={1785} $w={110} $c="#8a8a8a" />
    <Ghost>ID: xux28966</Ghost>
    <Brand>
      <BrandTop>
        <BrandName>万门</BrandName>
        <BrandBadge>大学</BrandBadge>
      </BrandTop>
      <BrandSearch>
        <BrandUrl>wanmen.org</BrandUrl>
        <BrandButton>
          <Art s={40}>
            <circle cx="18" cy="17" r="14.500" stroke="#e8eef5" strokeWidth="3.500" />
            <path d="M27 28l9 9" stroke="#e8eef5" strokeWidth="4.500" />
          </Art>
        </BrandButton>
      </BrandSearch>
    </Brand>
    <SubtotalDialog />
    <Mark $x={2578} $y={213} $w={157} $h={159} />
    <Mark $x={998} $y={677} $w={221} $h={72} />
    <Overlay width="2880" height="1800" viewBox="0 0 2880 1800">
      <path d="M1215 620L2488 235L2478 219L2535 235L2496 281V262L1219 630Q1211 629 1215 620z" fill="#fc0d1b" />
      <path d="M2685 402Q2690 393 2696 402L2618 756L2636 755L2594 797L2574 740L2590 750z" fill="#fc0d1b" />
      <path d="M2247 1261v31l7-6 6 13 6-3-6-12h14z" fill="#fff" stroke="#888" strokeWidth="1.500" />
    </Overlay>
    <StepNumber $x={2008} $y={251}>1</StepNumber>
    <StepNumber $x={2668} $y={537}>2</StepNumber>
    <Play>
      <Art s={36} h={38}><path d="M2 0l36 19L2 38z" fill="#fff" /></Art>
    </Play>
  </Screen>
);

export default App;
